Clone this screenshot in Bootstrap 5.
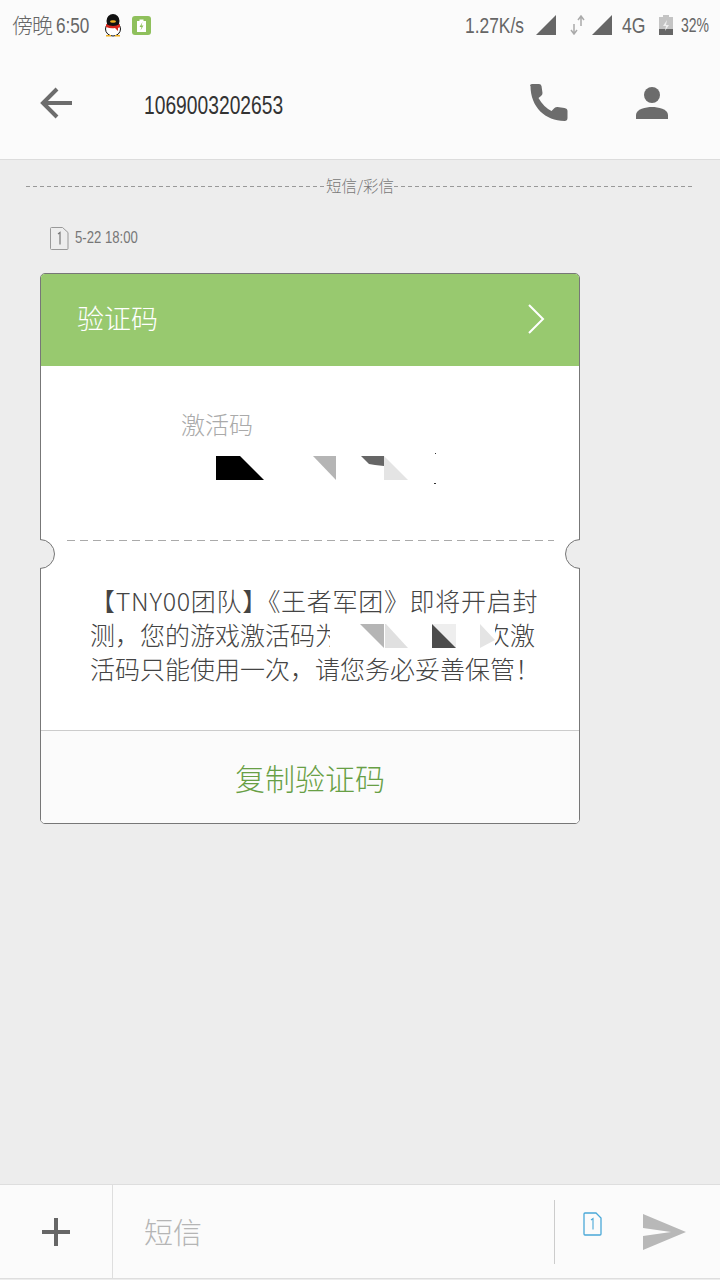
<!DOCTYPE html>
<html lang="zh-CN">
<head>
  <meta charset="UTF-8" />
  <meta name="viewport" content="width=device-width, initial-scale=1" />
  <title>1069003202653</title>
  <link href="https://cdn.jsdelivr.net/npm/bootstrap@5.3.0/dist/css/bootstrap.min.css" rel="stylesheet" />
  <style>
    body { background: #ededed; font-family: "Noto Sans CJK SC", sans-serif; font-weight: 300; }
    .sms-screen { width: 720px; height: 1280px; background: #ededed; }
    .sms-top { height: 160px; background: #fbfbfb; border-bottom: 1px solid #dcdcdc; }
    .status-row { height: 50px; padding: 0 12px; color: #666; }
    /* no narrow font here, so squeeze the latin text sideways */
    .squeeze { display: inline-block; font-family: "Liberation Sans", sans-serif; font-weight: 400; white-space: nowrap; transform-origin: left center; }
    .sq-clock { width: 36px; font-size: 22px; transform: scaleX(.78); }
    .sq-net { width: 59px; font-size: 22px; transform: scaleX(.79); }
    .sq-4g { width: 24px; font-size: 22px; transform: scaleX(.8); }
    .sq-pct { width: 27px; font-size: 20px; transform: scaleX(.7); }
    .sq-num { width: 139px; font-size: 25px; color: #333; transform: scaleX(.77); margin: 6px 0 0 72px; }
    .sq-date { width: 62px; font-size: 16px; transform: scaleX(.82); }
    .status-day { font-size: 21px; width: 44px; white-space: nowrap; letter-spacing: -1px; }
    .status-qq { margin-left: 12px; }
    .status-app { margin-left: 10px; }
    .gap-6 { margin-left: 6px; }
    .gap-8 { margin-left: 8px; }
    .gap-10 { margin-left: 10px; }
    .gap-12 { margin-left: 12px; }
    .gap-13 { margin-left: 13px; }
    .gap-14 { margin-left: 14px; }
    .head-row { height: 109px; padding: 0 52px 4px 40px; }
    .head-person { margin-left: 68px; }
    .mms-divider { margin: 16px 26px 0; height: 20px; color: #777; font-size: 15.5px; }
    .mms-line { flex: 1; height: 1px; background: repeating-linear-gradient(90deg, #999 0 4px, transparent 4px 7px); }
    .msg-meta { margin: 30px 0 0 50px; height: 24px; color: #777; }
    .meta-sim { margin-right: 6px; }
    .code-box { width: 540px; height: 551px; margin: 23px 0 0 40px; border: 1px solid #777; border-radius: 5px; background: #fff; --bs-card-bg: #fff; }
    .code-head { height: 92px; background: #98c96f; padding: 0 34px 3px 36px; color: #fff; font-size: 27px; border-radius: 4px 4px 0 0; }
    .code-main { height: 174px; padding: 42px 0 0 140px; }
    .code-label { font-size: 24px; line-height: 32px; color: #aaa; }
    .code-blot { display: block; margin: 12px 0 0 9px; }
    .code-tear { height: 1px; margin: 0 25px 0 26px; background: repeating-linear-gradient(90deg, #aaa 0 8px, transparent 8px 13px); }
    .code-notch { position: absolute; top: 265px; width: 30px; height: 30px; border-radius: 50%; background: #ededed; border: 1px solid #777; }
    .notch-l { left: -16px; clip-path: inset(0 0 0 50%); }
    .notch-r { right: -16px; clip-path: inset(0 50% 0 0); }
    .code-msg { height: 189px; padding: 42px 0 0 49px; font-size: 25px; line-height: 34px; color: #444; white-space: nowrap; }
    .msg-first { letter-spacing: .7px; }
    .msg-blot { vertical-align: -3px; overflow: visible; position: relative; z-index: 1; }
    .code-copy { height: 93px; border-top: 1px solid #ccc; background: #fbfbfb; color: #689f45; font-size: 30px; border-radius: 0 0 4px 4px; }
    .sms-input { height: 95px; background: #fbfbfb; border-top: 1px solid #dedede; border-bottom: 1px solid #dedede; margin-bottom: 1px; }
    .plus-cell { width: 113px; border-right: 1px solid #dedede; }
    .input-hint { font-size: 29px; color: #b5b5b5; padding-left: 31px; }
    .send-cell { width: 166px; height: 64px; border-left: 1px solid #ccc; padding-left: 28px; }
    .send-arrow { margin-left: 41px; }
  </style>
</head>
<body>
  <div class="sms-screen d-flex flex-column">
    <div class="sms-top">
      <div class="status-row d-flex align-items-center">
        <span class="status-day">傍晚</span>
        <span class="squeeze sq-clock">6:50</span>
        <!-- qq -->
        <svg width="18" height="23" viewBox="0 0 18 23" class="status-qq">
          <ellipse cx="9" cy="15" rx="7.500" ry="7" fill="#fff" stroke="#111" />
          <ellipse cx="9" cy="7" rx="6.500" ry="7" fill="#111" />
          <path d="M2 10q7 4 14 0v3l-2 1v3l-3-3q-4 1-9-1z" fill="#d8261c" />
          <ellipse cx="9" cy="7.500" rx="3" ry="1.200" fill="#f0b020" />
          <path d="M2 21h5v1.500h-5zM11 21h5v1.500h-5z" fill="#f0b020" />
        </svg>
        <svg width="19" height="19" viewBox="0 0 19 19" class="status-app">
          <rect width="19" height="19" rx="3" fill="#8fc05c" />
          <path d="M5 5h2.500v-1.500h4v1.500h2.500v11h-9z" fill="#fff" />
          <path d="M10.500 6l-3 5h2l-1 3.500 3-5h-2z" fill="#8fc05c" />
        </svg>
        <div class="ms-auto d-flex align-items-center">
          <span class="squeeze sq-net">1.27K/s</span>
          <svg width="20" height="20" viewBox="0 0 20 20" class="gap-12"><path d="M20 0v20h-20z" fill="#666" /></svg>
          <svg width="16" height="20" viewBox="0 0 16 20" class="gap-14"><path d="M4 9v9M1 15l3 4 3-4M11 1v10M8 5l3-4 3 4" fill="none" stroke="#aaa" stroke-width="1.500" /></svg>
          <svg width="20" height="20" viewBox="0 0 20 20" class="gap-6"><path d="M20 0v20h-20z" fill="#666" /></svg>
          <span class="squeeze sq-4g gap-10">4G</span>
          <svg width="14" height="20" viewBox="0 0 14 20" class="gap-13">
            <path d="M4 0h6v2h4v18h-14v-18h4z" fill="#c4c4c4" />
            <path d="M0 14h14v6h-14z" fill="#666" />
            <path d="M8 5l-4 6h3l-1 5 4-6h-3z" fill="#eee" />
          </svg>
          <span class="squeeze sq-pct gap-8">32%</span>
        </div>
      </div>
      <div class="head-row d-flex align-items-center">
        <svg width="32" height="32" viewBox="0 0 32 32">
          <path d="M32 16h-29M17 2l-14 14 14 14" fill="none" stroke="#6c6c6c" stroke-width="4" />
        </svg>
        <span class="squeeze sq-num">1069003202653</span>
        <svg width="38" height="38" viewBox="0 0 38 38" class="ms-auto">
          <path d="M0 2q0-2 2-2h7q2 0 2.500 2l1 7q0 2-1.500 3l-2.500 2q5 9 13 13l3-3q1-1 3-1l7 1q3 .5 3 3v7q0 3-3 3c-19 0-34-14-34-35z" fill="#6c6c6c" />
        </svg>
        <svg width="32" height="32" viewBox="0 0 32 32" class="head-person">
          <circle cx="16" cy="8" r="8" fill="#6c6c6c" />
          <path d="M0 32v-4c0-6 10-8 16-8s16 2 16 8v4z" fill="#6c6c6c" />
        </svg>
      </div>
    </div>

    <div class="mms-divider d-flex align-items-center">
      <div class="mms-line"></div>
      <span>短信/彩信</span>
      <div class="mms-line"></div>
    </div>

    <div class="msg-meta d-flex align-items-center">
      <svg width="19" height="23" viewBox="0 0 19 23" class="meta-sim">
        <path d="M1.500 .5h11l5.500 5v16q0 1-1 1h-15.500q-1 0-1-1v-20q0-1 1-1z" fill="none" stroke="#999" />
        <path d="M8 7l2-1.500v12" fill="none" stroke="#777" stroke-width="1.200" />
      </svg>
      <span class="squeeze sq-date">5-22 18:00</span>
    </div>

    <div class="code-box card position-relative">
      <div class="code-head d-flex align-items-center justify-content-between">
        <span>验证码</span>
        <svg width="18" height="30" viewBox="0 0 18 30"><path d="M2 1l14 14-14 14" fill="none" stroke="#fff" stroke-width="2" /></svg>
      </div>
      <div class="code-main">
        <div class="code-label">激活码</div>
        <svg class="code-blot" width="250" height="32" viewBox="190 452 250 32">
          <path d="M216 456h24l24 24h-48z" fill="#000" />
          <path d="M313 456h23v24z" fill="#b5b5b5" />
          <path d="M361 456h23v10l-9-1-6-1z" fill="#666" />
          <path d="M384 456l24 24h-24z" fill="#e4e4e4" />
          <path d="M435 453h1v1h-1zM434 483h2v1h-2z" fill="#333" />
        </svg>
      </div>
      <div class="code-tear"></div>
      <div class="code-notch notch-l"></div>
      <div class="code-notch notch-r"></div>
      <div class="code-msg"><span class="msg-first">【TNY00团队】《王者军团》即将开启封</span><br />测，您的游戏激活码为<svg class="msg-blot" width="145" height="24" viewBox="340 624 145 24">
          <path d="M330 620h165v32h-165z" fill="#fff" />
          <path d="M360 624h24v24z" fill="#b5b5b5" />
          <path d="M385 624h1l22 24h-23z" fill="#e0e0e0" />
          <path d="M432 624h24v24z" fill="#eee" />
          <path d="M432 624l24 24h-24z" fill="#4c4c4c" />
          <path d="M480 624l15 16-15 8z" fill="#e4e4e4" />
        </svg>次激<br />活码只能使用一次，请您务必妥善保管！</div>
      <div class="code-copy d-flex align-items-center justify-content-center">复制验证码</div>
    </div>

    <div class="sms-input d-flex align-items-stretch mt-auto">
      <div class="plus-cell d-flex align-items-center justify-content-center">
        <svg width="28" height="28" viewBox="0 0 28 28"><path d="M14 0v28M0 14h28" stroke="#666" stroke-width="4" /></svg>
      </div>
      <div class="input-hint flex-grow-1 d-flex align-items-center">短信</div>
      <div class="d-flex align-items-center">
        <div class="send-cell d-flex align-items-center">
          <svg width="19" height="24" viewBox="0 0 19 24" class="mb-3">
            <path d="M2 1h11l5 5v16q0 1-1 1h-15q-1 0-1-1v-20q0-1 1-1z" fill="none" stroke="#4aa8d8" stroke-width="1.300" />
            <path d="M8 8l2-1.500v11" fill="none" stroke="#4aa8d8" stroke-width="1.100" />
          </svg>
          <svg width="43" height="36" viewBox="0 0 43 36" class="send-arrow"><path d="M0 0l43 18-43 18v-14l28-4-28-4z" fill="#b8b8b8" /></svg>
        </div>
      </div>
    </div>
  </div>
  <script src="https://cdn.jsdelivr.net/npm/bootstrap@5.3.0/dist/js/bootstrap.bundle.min.js"></script>
</body>
</html>
